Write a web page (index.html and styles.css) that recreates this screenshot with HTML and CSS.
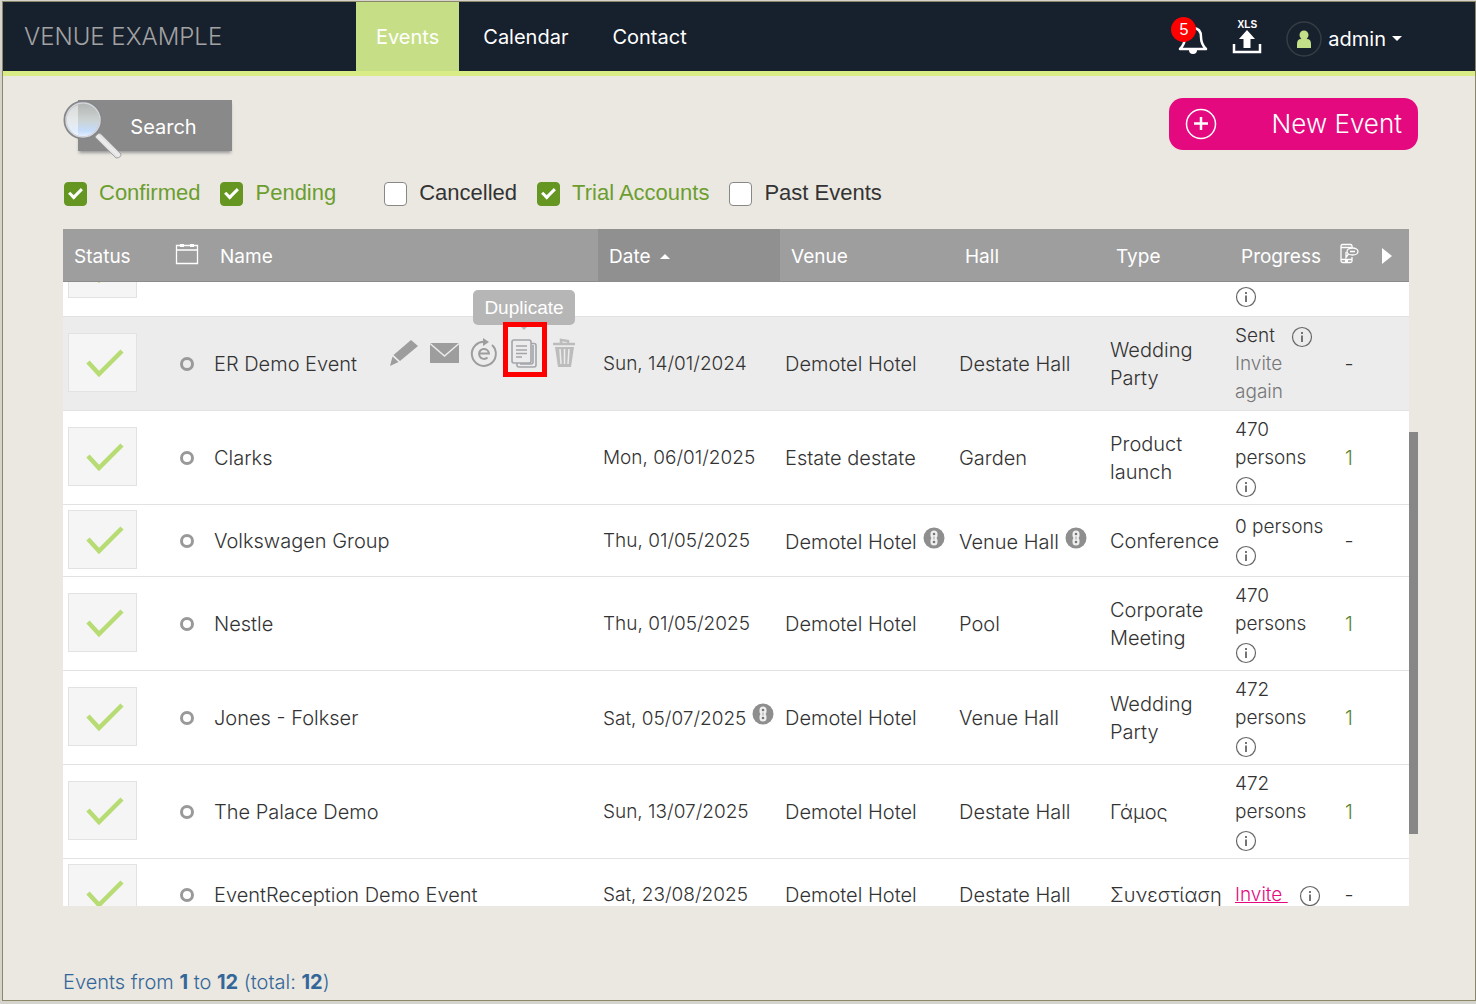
FILE: index.html
```html
<!DOCTYPE html>
<html lang="en">
<head>
<meta charset="utf-8">
<title>Venue Example - Events</title>
<link rel="stylesheet" href="styles.css">
</head>
<body>
<svg class="sprite" aria-hidden="true">
  <symbol id="check" viewBox="0 0 38 30"><path d="M2 13 13 25 36 2" fill="none" stroke="#b7dc74" stroke-width="4.500"/></symbol>
  <symbol id="info" viewBox="0 0 22 22"><circle cx="11" cy="11" r="9.500" fill="none" stroke="#666" stroke-width="1.200"/><path d="M11 9.500V16M11 6v2" fill="none" stroke="#666" stroke-width="1.800"/></symbol>
  <symbol id="link" viewBox="0 0 22 22"><circle cx="11" cy="11" r="10.500" fill="#8e8e8e"/><path d="M11 3.500a3.500 3.500 0 0 1 3.500 3.500v1.500q0 1.500-1 2.500 1 1 1 2.500V15a3.500 3.500 0 0 1-7 0v-1.500q0-1.500 1-2.500-1-1-1-2.500V7A3.500 3.500 0 0 1 11 3.500z" fill="#efefef"/><circle cx="11" cy="7" r="1.300" fill="#777"/><circle cx="11" cy="15" r="1.300" fill="#777"/><path d="M11 9.500v3" stroke="#aaa" stroke-width="1.200"/></symbol>
</svg>
<div class="window">
  <header class="topbar">
    <a class="brand" href="#">VENUE EXAMPLE</a>
    <nav class="nav">
      <a class="active" href="#">Events</a>
      <a href="#">Calendar</a>
      <a href="#">Contact</a>
    </nav>
    <div class="tools">
      <button class="bell" type="button" aria-label="Notifications">
        <svg width="30" height="32" viewBox="0 0 30 32"><path d="M2 26c4-4 5-7 5-12 0-6 3-9 8-9s8 3 8 9c0 5 1 8 5 12z" fill="none" stroke="#fff" stroke-width="2.500" stroke-linejoin="round"/><path d="M11 27h8a4 4 0 0 1-8 0z" fill="#fff"/></svg>
        <span class="badge">5</span>
      </button>
      <button class="export" type="button">
        <span>XLS</span>
        <svg width="30" height="24" viewBox="0 0 30 24"><path d="M15 0 23 9h-4.500v9h-7V9H7z" fill="#fff"/><path d="M2 14v8h26v-8" fill="none" stroke="#fff" stroke-width="2.500"/></svg>
      </button>
      <button class="account" type="button">
        <svg width="36" height="36" viewBox="0 0 36 36"><circle cx="18" cy="18" r="17" fill="none" stroke="#343d44" stroke-width="1.500"/><circle cx="18" cy="14" r="4.500" fill="#c3e088"/><path d="M11 27v-4q0-5 4-5h6q4 0 4 5v4z" fill="#c3e088"/></svg>
        <span>admin</span>
        <svg width="10" height="6" viewBox="0 0 10 6"><path d="M0 0h10L5 5z" fill="#fff"/></svg>
      </button>
    </div>
  </header>

  <main class="content">
    <div class="actions-bar">
      <button class="search" type="button">Search
        <svg class="lens" width="62" height="62" viewBox="0 0 62 62">
          <defs>
            <linearGradient id="glass" x1="0" y1="0" x2="0" y2="1"><stop offset="0" stop-color="#b0b4b2"/><stop offset=".5" stop-color="#ccd2d2"/><stop offset=".8" stop-color="#c4dcfb"/><stop offset="1" stop-color="#eef5ff"/></linearGradient>
            <linearGradient id="grip" x1="0" y1="1" x2="1" y2="0"><stop offset="0" stop-color="#8b8b8b"/><stop offset=".5" stop-color="#eee"/><stop offset="1" stop-color="#8c8c8c"/></linearGradient>
          </defs>
          <path d="M33 38q3-5 6-3l20 20q0 4-5 4z" fill="url(#grip)" stroke="#a2a2a2"/>
          <circle cx="21" cy="21" r="18" fill="url(#glass)" stroke="#85878b" stroke-width="3"/>
          <path d="M16 6a16 16 0 0 0-9 24q4 6 9 7z" fill="#fff" opacity=".5"/>
          <circle cx="21" cy="21" r="17" fill="none" stroke="#d6d8dc" stroke-width="1.500"/>
        </svg>
      </button>
      <button class="new-event" type="button">
        <svg width="32" height="32" viewBox="0 0 32 32"><circle cx="16" cy="16" r="14.500" fill="none" stroke="#fff" stroke-width="1.500"/><path d="M16 9v13M9 15.500h14" stroke="#fff" stroke-width="2.500"/></svg>
        <span>New Event</span>
      </button>
    </div>

    <form class="filters">
      <label class="on"><input type="checkbox" checked>Confirmed</label>
      <label class="on pending"><input type="checkbox" checked>Pending</label>
      <label><input type="checkbox">Cancelled</label>
      <label class="on"><input type="checkbox" checked>Trial Accounts</label>
      <label><input type="checkbox">Past Events</label>
    </form>

    <div class="grid">
      <div class="scroller" id="events">
        <table>
          <colgroup><col class="c-status"><col class="c-mark"><col><col class="c-date"><col class="c-venue"><col class="c-hall"><col class="c-type"><col class="c-progress"><col class="c-tables"><col class="c-more"></colgroup>
          <thead>
            <tr>
              <th>Status</th>
              <th class="mid"><svg width="24" height="24" viewBox="0 0 24 24"><path d="M1.500 3.500h21v18h-21zM1.500 8h21" fill="none" stroke="#fff" stroke-width="1.300"/><path d="M5 3.500h4M15 3.500h4" stroke="#fff" stroke-width="3"/></svg></th>
              <th>Name</th>
              <th class="sorted">Date <svg width="10" height="6" viewBox="0 0 10 6"><path d="M0 5h10L5 0z" fill="#fff"/></svg></th>
              <th>Venue</th>
              <th>Hall</th>
              <th>Type</th>
              <th>Progress</th>
              <th class="mid"><svg width="20" height="22" viewBox="0 0 20 22"><g fill="none" stroke="#fff" stroke-width="1.300"><path d="M13 5V3q0-1.500-1.500-1.500h-8Q2 1.500 2 3v15q0 1.500 1.500 1.500h8q1.500 0 1.500-1.500v-4M2 4.500h10M2 16.500h11M6 18h3"/><ellipse cx="13.500" cy="8.500" rx="5.500" ry="3.500"/><path d="M11 8.500h5M9.500 11 7 14.500V9"/></g></svg></th>
              <th class="mid more"><svg width="10" height="16" viewBox="0 0 10 16"><path d="M0 0 10 8 0 16z" fill="#fff"/></svg></th>
            </tr>
          </thead>
          <tbody>
            <tr class="tall">
              <td><span class="status"><svg><use href="#check"/></svg></span></td>
              <td></td><td></td><td></td><td></td><td></td><td></td>
              <td><svg class="info"><use href="#info"/></svg></td>
              <td></td><td></td>
            </tr>
            <tr class="hover">
              <td><span class="status"><svg><use href="#check"/></svg></span></td>
              <td class="mid"><i class="ring"></i></td>
              <td><div class="name">ER Demo Event
                <div class="row-actions">
                  <button type="button" aria-label="Edit"><svg width="30" height="28" viewBox="0 0 30 28"><path d="M22 1 29 7 11 22 4.500 16zM3.500 17.500 9.500 23 1 27z" fill="#9d9d9d"/></svg></button>
                  <button type="button" aria-label="Message"><svg width="30" height="28" viewBox="0 0 30 28"><path d="M1 4h29v20H1z" fill="#9d9d9d"/><path d="M1 4.500 15.500 17 30 4.500" fill="none" stroke="#ececec" stroke-width="1.500"/></svg></button>
                  <button type="button" aria-label="Event page"><svg width="30" height="28" viewBox="0 0 30 28"><path d="M17 3a12 12 0 1 0 6 3" fill="none" stroke="#9d9d9d" stroke-width="2"/><path d="M14-1l6 4-6 4z" fill="#9d9d9d"/><path d="M10.500 14.500h9.500a5 5 0 1 0-1.500 4" fill="none" stroke="#9d9d9d" stroke-width="2"/></svg></button>
                  <button class="duplicate" type="button" aria-label="Duplicate"><svg width="30" height="30" viewBox="0 0 30 30"><g fill="none" stroke="#a2a5a9" stroke-width="1.600"><rect x="3" y="2" width="19" height="23" rx="2"/><path d="M22 5.500h3q2 0 2 2V27q0 2-2 2H10q-2 0-2-2v-2M24 7v17q0 2-2 2H11M7 8h11M7 12h11M7 15.500h11M7 19h6"/></g></svg><span class="tooltip">Duplicate</span></button>
                  <button type="button" aria-label="Delete"><svg width="30" height="30" viewBox="0 0 30 30"><path d="M4 6h22M12 5V2l7 1v2" fill="none" stroke="#bcbcbc" stroke-width="2.500"/><path d="M6 9h19l-3 20H9z" fill="#bcbcbc"/><path d="m11 11 1 15M15.500 11v15m4.500-15-1 15" stroke="#ececec" stroke-width="1.500"/></svg></button>
                </div></div></td>
              <td>Sun, 14/01/2024</td><td>Demotel Hotel</td><td>Destate Hall</td><td>Wedding Party</td>
              <td>Sent <svg class="info gap"><use href="#info"/></svg><br><a class="muted" href="#">Invite again</a></td>
              <td class="mid">-</td><td></td>
            </tr>
            <tr>
              <td><span class="status"><svg><use href="#check"/></svg></span></td>
              <td class="mid"><i class="ring"></i></td>
              <td>Clarks</td><td>Mon, 06/01/2025</td><td>Estate destate</td><td>Garden</td><td>Product launch</td>
              <td>470<br>persons<br><svg class="info"><use href="#info"/></svg></td>
              <td class="mid count">1</td><td></td>
            </tr>
            <tr>
              <td><span class="status"><svg><use href="#check"/></svg></span></td>
              <td class="mid"><i class="ring"></i></td>
              <td>Volkswagen Group</td><td>Thu, 01/05/2025</td><td>Demotel Hotel<svg class="link"><use href="#link"/></svg></td><td>Venue Hall<svg class="link"><use href="#link"/></svg></td><td>Conference</td>
              <td>0 persons<br><svg class="info"><use href="#info"/></svg></td>
              <td class="mid">-</td><td></td>
            </tr>
            <tr>
              <td><span class="status"><svg><use href="#check"/></svg></span></td>
              <td class="mid"><i class="ring"></i></td>
              <td>Nestle</td><td>Thu, 01/05/2025</td><td>Demotel Hotel</td><td>Pool</td><td>Corporate Meeting</td>
              <td>470<br>persons<br><svg class="info"><use href="#info"/></svg></td>
              <td class="mid count">1</td><td></td>
            </tr>
            <tr>
              <td><span class="status"><svg><use href="#check"/></svg></span></td>
              <td class="mid"><i class="ring"></i></td>
              <td>Jones - Folkser</td><td>Sat, 05/07/2025<svg class="link"><use href="#link"/></svg></td><td>Demotel Hotel</td><td>Venue Hall</td><td>Wedding Party</td>
              <td>472<br>persons<br><svg class="info"><use href="#info"/></svg></td>
              <td class="mid count">1</td><td></td>
            </tr>
            <tr>
              <td><span class="status"><svg><use href="#check"/></svg></span></td>
              <td class="mid"><i class="ring"></i></td>
              <td>The Palace Demo</td><td>Sun, 13/07/2025</td><td>Demotel Hotel</td><td>Destate Hall</td><td>Γάμος</td>
              <td>472<br>persons<br><svg class="info"><use href="#info"/></svg></td>
              <td class="mid count">1</td><td></td>
            </tr>
            <tr>
              <td><span class="status"><svg><use href="#check"/></svg></span></td>
              <td class="mid"><i class="ring"></i></td>
              <td>EventReception Demo Event</td><td>Sat, 23/08/2025</td><td>Demotel Hotel</td><td>Destate Hall</td><td>Συνεστίαση</td>
              <td><a class="invite" href="#">Invite&nbsp;</a><svg class="info gap"><use href="#info"/></svg></td>
              <td class="mid">-</td><td></td>
            </tr>
          </tbody>
        </table>
      </div>
      <div class="track"><div class="thumb"></div></div>
    </div>

    <p class="summary">Events from <b>1</b> to <b>12</b> (total: <b>12</b>)</p>
  </main>
</div>
<script src="script.js"></script>
</body>
</html>
```
FILE: styles.css
```css
*, *::before, *::after { box-sizing: border-box; }
body {
  margin: 0;
  height: 100vh;
  padding: 1px 0 3px 2px;
  background: #d5d4cc;
  color: #333;
  font: 300 19px/28px Inter, "Noto Sans", sans-serif;
}
button { border: 0; padding: 0; background: none; color: inherit; font: inherit; cursor: pointer; }
svg { display: block; overflow: visible; }
a { color: inherit; text-decoration: none; }
.sprite { position: absolute; width: 0; height: 0; }

.window {
  display: flex;
  flex-direction: column;
  height: 100%;
  border: 1px solid #8c8768;
  background: #ebe8e1;
}

.topbar {
  display: flex;
  align-items: stretch;
  height: 74px;
  padding-right: 73px;
  border-bottom: 5px solid #daec86;
  background: #17202d;
  color: #fff;
}
.brand { width: 353px; padding-left: 21px; line-height: 70px; font-size: 24px; color: #a2a2a2; }
.nav { display: flex; gap: 4px; font-size: 20px; font-weight: 400; }
.nav a { padding: 0 20px; line-height: 70px; }
.nav .active { background: #c6df86; }
.tools { display: flex; align-items: center; gap: 24px; margin-left: auto; padding-top: 4px; }
.bell { position: relative; }
.badge {
  position: absolute;
  left: -7px;
  top: -6px;
  width: 25px;
  height: 25px;
  border-radius: 50%;
  background: #f00;
  font: 16px/25px "Liberation Sans", sans-serif;
}
.export { display: grid; justify-items: center; padding-bottom: 4px; }
.export span { font: bold 10px/10px "Liberation Sans", sans-serif; }
.account { display: flex; align-items: center; gap: 6px; font-size: 20px; font-weight: 400; }

.content { display: flex; flex-direction: column; flex: 1; min-height: 0; padding: 22px 57px 4px 60px; }
.actions-bar { display: flex; justify-content: space-between; align-items: flex-start; height: 81px; }
.search {
  position: relative;
  width: 154px;
  height: 51px;
  margin: 2px 0 0 15px;
  padding-left: 17px;
  background: #898989;
  box-shadow: 0 3px 3px -1px #999;
  color: #fff;
  font-size: 20px;
  font-weight: 400;
  line-height: 55px;
}
.lens { position: absolute; left: -16px; top: -1px; }
.new-event {
  display: flex;
  justify-content: space-between;
  align-items: center;
  width: 249px;
  height: 52px;
  padding: 0 16px;
  border-radius: 14px;
  background: #e5097f;
  color: #fff;
  font-size: 26px;
}

.filters { display: flex; gap: 20px; padding-left: 1px; font: 22px/28px "Liberation Sans", sans-serif; }
.filters label { display: flex; align-items: center; gap: 12px; }
.filters .on { color: #6b9e2f; }
.filters .pending { margin-right: 28px; }
.filters input {
  appearance: none;
  display: grid;
  place-items: center;
  width: 23px;
  height: 24px;
  margin: 2px 0 0;
  border: 1px solid #888;
  border-radius: 4px;
  background: #fff;
}
.filters input:checked { border-color: #649621; background: #649621; }
.filters input:checked::before {
  content: "";
  width: 13px;
  height: 8px;
  margin-bottom: 4px;
  border: solid #fff;
  border-width: 0 0 3px 3px;
  transform: rotate(-45deg);
}

.grid { display: flex; flex: 1; min-height: 0; margin-top: 22px; }
.scroller { flex: 1; overflow: hidden; background: #fff; }
table { width: 100%; border-collapse: separate; border-spacing: 0; table-layout: fixed; }
.c-status { width: 102px; }
.c-mark { width: 44px; }
.c-date { width: 182px; }
.c-venue { width: 174px; }
.c-hall { width: 151px; }
.c-type { width: 125px; }
.c-progress { width: 104px; }
.c-tables { width: 30px; }
.c-more { width: 45px; }
th {
  position: sticky;
  top: 0;
  z-index: 1;
  height: 53px;
  padding: 3px 0 0 11px;
  border-bottom: 1px solid #8c8c8c;
  background: #9e9e9e;
  color: #fff;
  font-weight: 400;
  text-align: left;
  white-space: nowrap;
}
th svg { display: inline-block; }
th.sorted { background: #909090; }
th.sorted svg { margin: 0 0 3px 4px; }
th.mid { padding: 0 0 4px; }
th.mid svg { vertical-align: middle; }
th.more { padding: 0; }
td { height: 72px; padding: 5px 0 4px 5px; border-bottom: 1px solid #e2e2e2; font-size: 20px; }
td:first-child { padding: 4px 0 7px 5px; }
td:nth-child(4), td:nth-child(8) { font-size: 19px; }
.mid { padding-left: 0; padding-right: 0; text-align: center; }
.tall td { height: 94px; }
.tall td:nth-child(8) { padding-bottom: 6px; vertical-align: bottom; }
.hover td { background: #ececec; }
.count { color: #5b8430; }
.status {
  display: grid;
  place-items: center;
  width: 69px;
  height: 59px;
  padding-top: 3px;
  border: 1px solid #e2e2e2;
  background: #f5f5f5;
}
.status svg { width: 38px; height: 30px; margin-left: 4px; }
.ring { display: block; width: 14px; height: 14px; margin: auto; border: 3px solid #999; border-radius: 50%; }
.info { display: inline-block; width: 22px; height: 22px; vertical-align: -6px; }
.info.gap { margin-left: 11px; }
.link { display: inline-block; width: 22px; height: 22px; margin-left: 6px; vertical-align: 0; }
.muted { color: #777; }
.invite { color: #e5097f; text-decoration: underline; }

.name { display: flex; justify-content: space-between; align-items: center; }
.row-actions { display: flex; margin: 0 14px 22px 0; }
.row-actions button { display: grid; place-items: center; width: 40px; height: 30px; }
.row-actions .duplicate { position: relative; }
.duplicate::after {
  content: "";
  position: absolute;
  left: -1px;
  top: -16px;
  width: 44px;
  height: 55px;
  border: 5px solid #f00;
}
.tooltip {
  position: absolute;
  left: -31px;
  top: -48px;
  width: 102px;
  border-radius: 5px;
  background: #b6b6b6;
  color: #fff;
  font: 19px/35px "Liberation Sans", sans-serif;
}
.tooltip::after {
  content: "";
  position: absolute;
  left: 46px;
  top: 35px;
  border: 5px solid transparent;
  border-top-color: #b6b6b6;
}

.track { width: 9px; padding: 203px 0 72px; }
.thumb { height: 100%; background: #878787; }

.summary { margin: 62px 0 0; color: #346799; font-size: 20px; }
.summary b { font-weight: 700; }
```
FILE: script.js
```js
document.getElementById("events").scrollTop = 59;
```
